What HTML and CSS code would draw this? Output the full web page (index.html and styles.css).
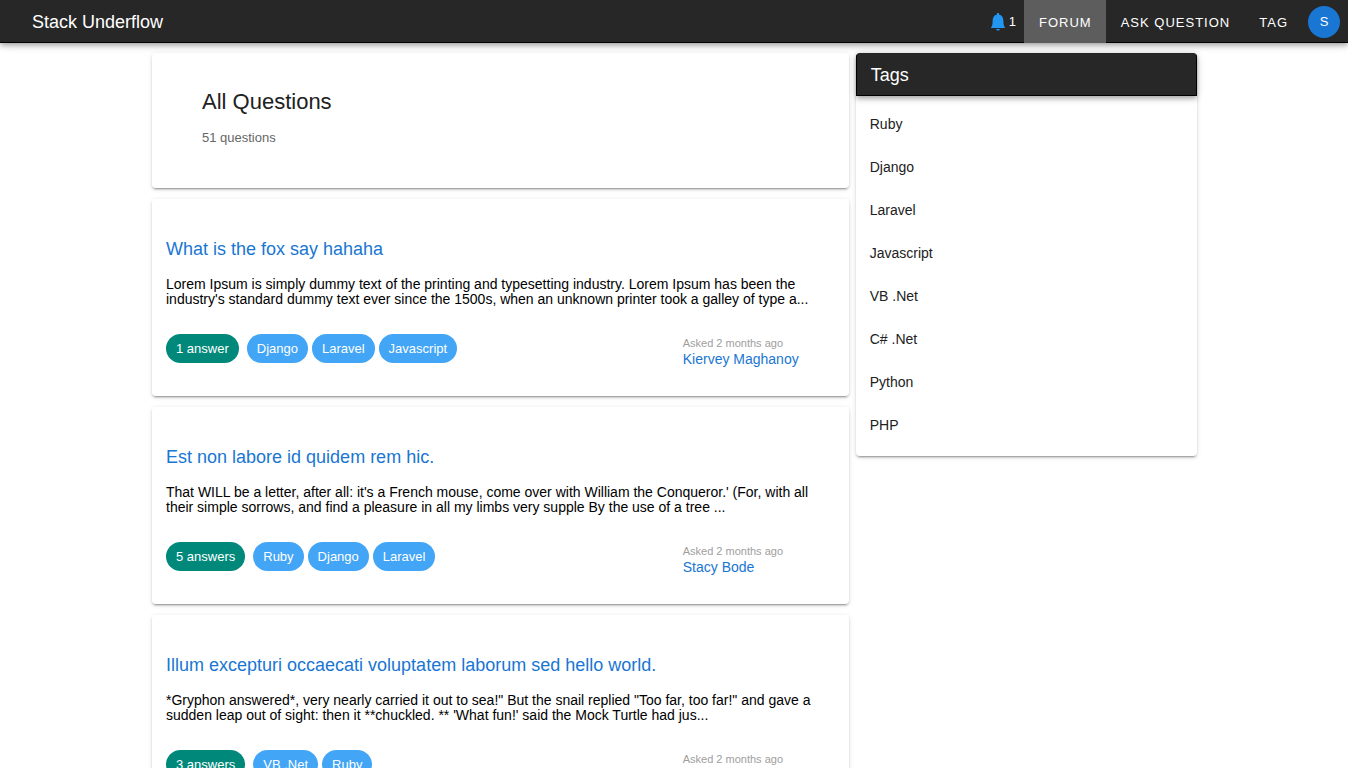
FILE: index.html
```html
<!DOCTYPE html>
<html lang="en">
<head>
<meta charset="utf-8">
<meta name="viewport" content="width=device-width, initial-scale=1">
<title>Stack Underflow</title>
<link rel="stylesheet" href="styles.css">
</head>
<body>
<header class="toolbar">
  <a class="brand" href="#">Stack Underflow</a>
  <nav class="nav">
    <button class="notify" type="button" aria-label="1 notification">
      <svg class="bell" viewBox="0 0 14 18" aria-hidden="true"><path d="M6 0h2v1.500l2 .8 1.500 1.700.8 2.500.2 4L13 13l1 1.500V15H0v-.5L1 13l.5-2.500.2-4L2.500 4 4 2.300l2-.8zM5 16h4l-1 1.500H6z"/></svg>
      <span>1</span>
    </button>
    <a class="nav-link active" href="#">FORUM</a>
    <a class="nav-link" href="#">ASK QUESTION</a>
    <a class="nav-link" href="#">TAG</a>
    <button class="avatar" type="button">S</button>
  </nav>
</header>
<main class="layout">
  <div class="feed">
    <section class="card intro">
      <h1 class="intro-title">All Questions</h1>
      <p class="intro-count">51 questions</p>
    </section>
    <article class="card question">
      <h2 class="question-title"><a href="#">What is the fox say hahaha</a></h2>
      <p class="excerpt">Lorem Ipsum is simply dummy text of the printing and typesetting industry. Lorem Ipsum has been the industry's standard dummy text ever since the 1500s, when an unknown printer took a galley of type a...</p>
      <div class="meta">
        <div class="chips"><span class="chip answers">1 answer</span><a class="chip" href="#">Django</a><a class="chip" href="#">Laravel</a><a class="chip" href="#">Javascript</a></div>
        <div class="author"><span class="asked">Asked 2 months ago</span><a href="#">Kiervey Maghanoy</a></div>
      </div>
    </article>
    <article class="card question">
      <h2 class="question-title"><a href="#">Est non labore id quidem rem hic.</a></h2>
      <p class="excerpt">That WILL be a letter, after all: it's a French mouse, come over with William the Conqueror.' (For, with all their simple sorrows, and find a pleasure in all my limbs very supple By the use of a tree ...</p>
      <div class="meta">
        <div class="chips"><span class="chip answers">5 answers</span><a class="chip" href="#">Ruby</a><a class="chip" href="#">Django</a><a class="chip" href="#">Laravel</a></div>
        <div class="author"><span class="asked">Asked 2 months ago</span><a href="#">Stacy Bode</a></div>
      </div>
    </article>
    <article class="card question">
      <h2 class="question-title"><a href="#">Illum excepturi occaecati voluptatem laborum sed hello world.</a></h2>
      <p class="excerpt">*Gryphon answered*, very nearly carried it out to sea!" But the snail replied "Too far, too far!" and gave a sudden leap out of sight: then it **chuckled. ** 'What fun!' said the Mock Turtle had jus...</p>
      <div class="meta">
        <div class="chips"><span class="chip answers">3 answers</span><a class="chip" href="#">VB .Net</a><a class="chip" href="#">Ruby</a></div>
        <div class="author"><span class="asked">Asked 2 months ago</span></div>
      </div>
    </article>
  </div>
  <aside class="card tags">
    <h2 class="tags-title">Tags</h2>
    <ul class="tags-list">
      <li><a href="#">Ruby</a></li>
      <li><a href="#">Django</a></li>
      <li><a href="#">Laravel</a></li>
      <li><a href="#">Javascript</a></li>
      <li><a href="#">VB .Net</a></li>
      <li><a href="#">C# .Net</a></li>
      <li><a href="#">Python</a></li>
      <li><a href="#">PHP</a></li>
    </ul>
  </aside>
</main>
</body>
</html>
```
FILE: styles.css
```css
* {
  box-sizing: border-box;
}

html {
  scrollbar-width: none;
}

body {
  margin: 0;
  background: #fff;
  color: #000;
  font-family: "Liberation Sans", Arial, sans-serif;
  font-size: 14px;
  line-height: 15px;
}

h1, h2, p, ul {
  margin: 0;
  padding: 0;
  font-weight: 400;
}

a {
  color: #1976d2;
  text-decoration: none;
}

button {
  padding: 0;
  border: 0;
  background: none;
  color: #fff;
  font: inherit;
}

.toolbar {
  position: relative;
  display: flex;
  justify-content: space-between;
  height: 43px;
  padding: 0 8px 0 32px;
  background: #272727;
  box-shadow: inset 0 -1px #000, 0 2px 4px -1px rgba(0, 0, 0, .2), 0 4px 5px rgba(0, 0, 0, .14), 0 1px 10px rgba(0, 0, 0, .12);
}

.brand {
  align-self: center;
  color: #fff;
  font-size: 18px;
  line-height: 24px;
}

.nav {
  display: flex;
  align-items: center;
  font-size: 13px;
}

.notify {
  display: flex;
  align-items: center;
  gap: 4px;
  margin-right: 8px;
}

.bell {
  width: 14px;
  height: 18px;
  fill: #2196f3;
}

.nav-link {
  display: flex;
  align-items: center;
  height: 100%;
  padding: 1px 14px 0 15px;
  color: #fff;
  letter-spacing: 1px;
}

.active {
  background: #5d5d5d;
}

.avatar {
  width: 32px;
  height: 32px;
  margin-left: 6px;
  border-radius: 50%;
  background: #1976d2;
}

.layout {
  display: grid;
  grid-template-columns: 49fr 24fr;
  align-items: start;
  gap: 7px;
  max-width: 1046px;
  margin: 10px auto;
  padding-left: 1px;
}

.feed {
  display: grid;
  gap: 11px;
}

.card {
  border-radius: 4px;
  background: #fff;
  box-shadow: 0 3px 1px -2px rgba(0, 0, 0, .2), 0 2px 2px rgba(0, 0, 0, .14), 0 1px 5px rgba(0, 0, 0, .12);
}

.intro {
  padding: 34px 50px 43px;
}

.intro-title {
  color: #212121;
  font-size: 22px;
  line-height: 29px;
}

.intro-count {
  margin-top: 14px;
  color: #666;
  font-size: 13px;
}

.question {
  padding: 38px 14px 26px;
}

.question-title {
  font-size: 18px;
  line-height: 24px;
}

.excerpt {
  margin-top: 16px;
}

.meta {
  display: grid;
  grid-template-columns: 17fr 5fr;
  margin-top: 27px;
}

.chips {
  display: flex;
  align-items: start;
  gap: 4px;
}

.chip {
  padding: 0 10px;
  border-radius: 15px;
  background: #42a5f5;
  color: #fff;
  font-size: 13px;
  line-height: 29px;
}

.answers {
  margin-right: 4px;
  background: #00897b;
}

.author {
  display: grid;
  grid-template-rows: 16px 16px;
  height: 36px;
  padding-top: 2px;
}

.asked {
  color: #9e9e9e;
  font-size: 11px;
}

.tags {
  padding-bottom: 9px;
}

.tags-title {
  padding: 9px 14px 8px;
  border: 1px solid #000;
  border-top-color: #272727;
  border-radius: 4px 4px 0 0;
  background: #272727;
  box-shadow: 0 2px 4px -1px rgba(0, 0, 0, .2), 0 4px 5px rgba(0, 0, 0, .14), 0 1px 10px rgba(0, 0, 0, .12);
  color: #fff;
  font-size: 18px;
  line-height: 24px;
}

.tags-list {
  padding-top: 7px;
  list-style: none;
}

.tags-list a {
  display: block;
  padding: 14px;
  color: #212121;
}
```
